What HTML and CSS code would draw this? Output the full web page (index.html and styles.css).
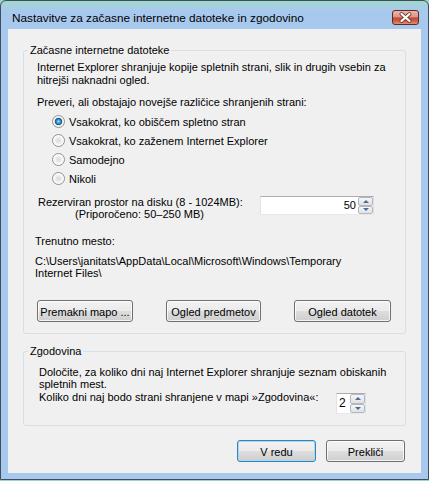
FILE: index.html
```html
<!DOCTYPE html>
<html lang="sl">
<head>
<meta charset="utf-8">
<title>Nastavitve za začasne internetne datoteke in zgodovino</title>
<link rel="stylesheet" href="styles.css">
</head>
<body>
<div class="window">
  <div class="titlebar">
    <span class="title">Nastavitve za začasne internetne datoteke in zgodovino</span>
    <button class="close" type="button" aria-label="Zapri">
      <svg width="25" height="13" viewBox="0 0 25 13">
        <path d="M8.5 3 L16.5 10 M16.5 3 L8.5 10" stroke="#7a3b33" stroke-width="4" stroke-linecap="round" fill="none"/>
        <path d="M8.5 3 L16.5 10 M16.5 3 L8.5 10" stroke="#ffffff" stroke-width="2.2" stroke-linecap="round" fill="none"/>
      </svg>
    </button>
  </div>
  <div class="client">
    <div class="group group-cache">
      <span class="legend">Začasne internetne datoteke</span>
      <p class="intro">Internet Explorer shranjuje kopije spletnih strani, slik in drugih vsebin za<br>hitrejši naknadni ogled.</p>
      <p class="check-label">Preveri, ali obstajajo novejše različice shranjenih strani:</p>
      <div class="radios">
        <label class="radio-row"><span class="radio checked"></span>Vsakokrat, ko obiščem spletno stran</label>
        <label class="radio-row"><span class="radio"></span>Vsakokrat, ko zaženem Internet Explorer</label>
        <label class="radio-row"><span class="radio"></span>Samodejno</label>
        <label class="radio-row"><span class="radio"></span>Nikoli</label>
      </div>
      <div class="disk-row">
        <div class="disk-label">Rezerviran prostor na disku (8 - 1024MB):<br>(Priporočeno: 50–250 MB)</div>
        <div class="spin spin-disk">
          <span class="spin-value">50</span>
          <span class="spin-btns"><span class="spin-up"></span><span class="spin-down"></span></span>
        </div>
      </div>
      <p class="loc-label">Trenutno mesto:</p>
      <p class="loc-path">C:\Users\janitats\AppData\Local\Microsoft\Windows\Temporary<br>Internet Files\</p>
      <div class="btn-row">
        <button class="btn btn-move" type="button">Premakni mapo ...</button>
        <button class="btn btn-objects" type="button">Ogled predmetov</button>
        <button class="btn btn-files" type="button">Ogled datotek</button>
      </div>
    </div>
    <div class="group group-history">
      <span class="legend">Zgodovina</span>
      <p class="hist-text">Določite, za koliko dni naj Internet Explorer shranjuje seznam obiskanih<br>spletnih mest.</p>
      <div class="days-row">
        <span class="days-label">Koliko dni naj bodo strani shranjene v mapi »Zgodovina«:</span>
        <div class="spin spin-days">
          <span class="spin-value">2</span>
          <span class="spin-btns"><span class="spin-up"></span><span class="spin-down"></span></span>
        </div>
      </div>
    </div>
    <div class="dialog-btns">
      <button class="btn btn-default" type="button">V redu</button>
      <button class="btn" type="button">Prekliči</button>
    </div>
  </div>
</div>
</body>
</html>
```
FILE: styles.css
```css
* { box-sizing: border-box; }
html, body { margin: 0; padding: 0; }
body {
  width: 429px;
  height: 481px;
  overflow: hidden;
  background: #9fd2cd;
  font-family: "Liberation Sans", Arial, sans-serif;
  font-size: 11px;
  color: #000;
}
p { margin: 0; }

.window {
  width: 429px;
  height: 480px;
  border: 1px solid #3f4d5e;
  border-radius: 6px 6px 0 0;
  background: linear-gradient(to bottom, #a2d6d0 0, #a2d6d0 3px, #a7cde6 6px, #a8c9ee 10px, #a8c9ee 100%);
  display: flex;
  flex-direction: column;
}

.titlebar {
  flex: none;
  height: 28px;
  display: flex;
  justify-content: space-between;
  align-items: flex-start;
  padding: 9px 9px 0 11px;
}
.title {
  font-size: 11.8px;
  line-height: 16px;
  white-space: nowrap;
}
.close {
  display: block;
  width: 27px;
  height: 15px;
  margin: 0;
  padding: 0;
  border: 1px solid #5e2b24;
  border-radius: 3px;
  background: linear-gradient(to bottom, #ecb6a9 0%, #dc9788 45%, #c4503c 52%, #c9523a 70%, #e0916c 100%);
}
.close svg { display: block; }

.client {
  flex: none;
  height: 444px;
  margin: 0 7px;
  background: #f0f0f0;
  padding: 21px 15px 0;
  display: flex;
  flex-direction: column;
}

.group {
  position: relative;
  border: 1px solid #d5dfe5;
  border-radius: 3px;
}
.legend {
  position: absolute;
  top: -7px;
  left: 4px;
  padding: 0 2px;
  background: #f0f0f0;
  line-height: 13px;
  white-space: nowrap;
}

.group-cache { padding: 10px 14px 11px 13px; }
.intro { line-height: 13px; white-space: nowrap; }
.check-label { margin-top: 9px; line-height: 13px; }

.radios { margin-top: 3px; padding-left: 15px; }
.radio-row {
  display: flex;
  align-items: center;
  height: 19px;
  white-space: nowrap;
}
.radio {
  flex: none;
  width: 13px;
  height: 13px;
  margin-right: 4px;
  border-radius: 50%;
  border: 1px solid #8f9090;
  background: radial-gradient(circle at 50% 50%, #dadada 0, #e9e9e9 2.5px, #f7f7f7 4px, #ffffff 5.5px);
}
.radio.checked {
  background: radial-gradient(circle at 50% 50%, #9be6fb 0, #3aa7dc 1.6px, #1a6aa6 2.8px, #1d4f80 3.4px, #e2e2e2 3.9px, #f3f3f3 4.6px, #ffffff 5.5px);
}

.disk-row {
  display: flex;
  align-items: flex-start;
  margin-top: 8px;
}
.disk-label {
  width: 203px;
  margin-left: 1px;
  text-align: center;
  line-height: 12px;
  white-space: nowrap;
}

.spin {
  display: flex;
  background: #fff;
  border: 1px solid;
  border-color: #abadb3 #dbdfe6 #e3e9ef #e2e3ea;
}
.spin-value {
  flex: 1;
  text-align: right;
  padding-right: 2px;
}
.spin-btns {
  flex: none;
  width: 15px;
  display: flex;
  flex-direction: column;
}
.spin-btns span {
  flex: 1;
  display: flex;
  align-items: center;
  justify-content: center;
  border: 1px solid #b4b7bc;
  border-radius: 2px;
  background: linear-gradient(to bottom, #f6f6f6, #dfe1e3);
}
.spin-up::before {
  content: "";
  border-left: 3px solid transparent;
  border-right: 3px solid transparent;
  border-bottom: 3px solid #4a6b98;
}
.spin-down::before {
  content: "";
  border-left: 3px solid transparent;
  border-right: 3px solid transparent;
  border-top: 3px solid #4a6b98;
}
.spin-disk {
  width: 114px;
  height: 19px;
  margin-left: 19px;
}
.spin-disk .spin-value { line-height: 17px; }

.loc-label { margin-top: 15px; margin-left: -2px; line-height: 13px; }
.loc-path { margin-top: 7px; margin-left: -2px; line-height: 12px; white-space: nowrap; }

.btn-row {
  margin-top: 21px;
  display: flex;
  justify-content: space-between;
}
.btn {
  height: 22px;
  margin: 0;
  padding: 1px 0 0;
  font-family: inherit;
  font-size: 11px;
  color: #000;
  border: 1px solid #707070;
  border-radius: 3px;
  background: linear-gradient(to bottom, #f2f2f2 0%, #ebebeb 48%, #dddddd 52%, #cfcfcf 100%);
  box-shadow: inset 0 0 0 1px rgba(255, 255, 255, 0.75);
}
.btn-move { width: 96px; }
.btn-objects { width: 95px; }
.btn-files { width: 97px; }

.group-history {
  margin-top: 17px;
  padding: 14px 14px 11px 15px;
}
.hist-text { line-height: 12px; white-space: nowrap; }
.days-row {
  display: flex;
  align-items: flex-start;
  margin-top: 1px;
}
.days-label {
  width: 297px;
  line-height: 13px;
  white-space: nowrap;
}
.spin-days {
  width: 30px;
  height: 21px;
  margin-top: 2px;
}
.spin-days .spin-value {
  font-size: 12px;
  line-height: 19px;
  text-align: left;
  padding-left: 2px;
}

.dialog-btns {
  margin-top: 14px;
  display: flex;
  justify-content: flex-end;
  gap: 10px;
  padding-right: 1px;
}
.dialog-btns .btn { width: 79px; }
.btn-default {
  border-color: #3c7fb1;
  box-shadow: inset 0 0 0 1px #9fdcf7;
}
```
